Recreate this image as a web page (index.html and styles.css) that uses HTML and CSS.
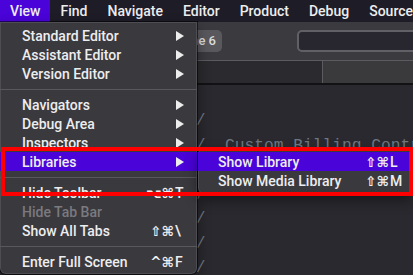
FILE: index.html
```html
<!DOCTYPE html>
<html lang="en">
<head>
    <meta charset="UTF-8">
    <meta name="viewport" content="width=device-width, initial-scale=1.0">
    <title>Xcode - View menu</title>
    <link rel="stylesheet" href="styles.css">
</head>
<body>
    <div class="menubar">
        <span class="menubar-item active">View</span>
        <span class="menubar-item">Find</span>
        <span class="menubar-item">Navigate</span>
        <span class="menubar-item">Editor</span>
        <span class="menubar-item">Product</span>
        <span class="menubar-item">Debug</span>
        <span class="menubar-item">Source Control</span>
    </div>

    <div class="window">
        <div class="toolbar">
            <div class="scheme">iPhone 6</div>
            <div class="search"></div>
        </div>
        <div class="tabbar">
            <div class="tab-left"></div>
            <div class="tab-right"></div>
        </div>
        <div class="editor">
            <div class="code-line">//</div>
            <div class="code-line">//  Custom Billing Contr</div>
            <div class="code-line">//</div>
            <div class="code-line">//</div>
            <div class="code-line">//</div>
            <div class="code-line">//</div>
            <div class="code-line">//</div>
        </div>
    </div>

    <!-- View menu -->
    <div class="menu view-menu">
        <div class="menu-item">Standard Editor <span class="arrow"></span></div>
        <div class="menu-item">Assistant Editor <span class="arrow"></span></div>
        <div class="menu-item">Version Editor <span class="arrow"></span></div>
        <div class="separator"></div>
        <div class="menu-item">Navigators <span class="arrow"></span></div>
        <div class="menu-item">Debug Area <span class="arrow"></span></div>
        <div class="menu-item">Inspectors <span class="arrow"></span></div>
        <div class="menu-item selected">Libraries <span class="arrow"></span></div>
        <div class="separator"></div>
        <div class="menu-item">Hide Toolbar <span class="shortcut"><span class="mods">⌥⌘</span><span class="key">T</span></span></div>
        <div class="menu-item disabled">Hide Tab Bar</div>
        <div class="menu-item">Show All Tabs <span class="shortcut"><span class="mods">⇧⌘</span><span class="key">\</span></span></div>
        <div class="separator"></div>
        <div class="menu-item">Enter Full Screen <span class="shortcut"><span class="mods">^⌘</span><span class="key">F</span></span></div>
    </div>

    <!-- Libraries submenu -->
    <div class="menu submenu">
        <div class="menu-item selected">Show Library <span class="shortcut"><span class="mods">⇧⌘</span><span class="key">L</span></span></div>
        <div class="menu-item">Show Media Library <span class="shortcut"><span class="mods">⇧⌘</span><span class="key">M</span></span></div>
    </div>

    <div class="callout"></div>
</body>
</html>
```

FILE: styles.css
```css
* {
    margin: 0;
    padding: 0;
    box-sizing: border-box;
}

body {
    position: relative;
    width: 413px;
    height: 275px;
    overflow: hidden;
    background: #29292f;
    font-family: 'Roboto', 'DejaVu Sans', sans-serif;
    color: #ededee;
}

/* Menu bar */
.menubar {
    display: flex;
    height: 22px;
    overflow: hidden;
    background: #1e1c27;
    font-size: 14px;
    font-weight: 500;
    white-space: nowrap;
}

.menubar-item {
    padding: 0 9px 0 11px;
    line-height: 22px;
}

.menubar-item:first-child {
    padding-left: 10px;
}

.menubar-item.active {
    background: #4a03d8;
}

/* Window behind the menu */
.toolbar {
    display: flex;
    align-items: center;
    height: 39px;
    overflow: hidden;
    background: #3b3a3f;
    border-bottom: 1px solid #5c5b60;
}

.scheme {
    flex-shrink: 0;
    width: 70px;
    height: 22px;
    margin-left: 152px;
    padding-right: 6px;
    border-radius: 5px;
    background: #59585d;
    color: #dcdcdc;
    font-size: 13px;
    font-weight: 500;
    line-height: 22px;
    text-align: right;
}

.search {
    flex-shrink: 0;
    width: 140px;
    height: 22px;
    margin-left: 75px;
    border: 2px solid #616066;
    border-radius: 5px;
    background: #28262f;
}

.tabbar {
    display: flex;
    height: 24px;
    border-bottom: 2px solid #121114;
}

.tab-left {
    width: 322px;
    background: #2b2a2e;
}

.tab-right {
    flex: 1;
    background: #3a3a3c;
    border-left: 1px solid #5c5b60;
}

.editor {
    height: 189px;
    overflow: hidden;
    padding: 24px 0 0 186px;
    font-family: 'Liberation Mono', monospace;
    font-size: 16.25px;
    line-height: 24.5px;
    color: #6f7781;
}

.code-line {
    white-space: pre;
}

/* Menus */
.menu {
    position: absolute;
    background: #3a393e;
    box-shadow: 0 0 0 1px rgba(0, 0, 0, 0.55), inset 0 0 0 1px rgba(255, 255, 255, 0.1), 0 6px 14px rgba(0, 0, 0, 0.45);
    font-size: 14px;
    font-weight: 500;
    white-space: nowrap;
}

.view-menu {
    top: 22px;
    left: 0;
    width: 197px;
    padding: 4px 0 3px;
    border-radius: 0 0 6px 6px;
}

.submenu {
    top: 148px;
    left: 198px;
    width: 215px;
    padding: 4px 0;
    border-radius: 6px 0 0 6px;
}

.menu-item {
    display: flex;
    align-items: center;
    justify-content: space-between;
    height: 19px;
    padding: 0 12px 0 22px;
}

.submenu .menu-item {
    padding: 0 8px 0 20px;
}

.menu-item.selected {
    background: #4a03d8;
}

.menu-item.disabled {
    color: #7b7a7f;
}

.arrow {
    width: 0;
    height: 0;
    margin-right: 1px;
    border-left: 8px solid #ededee;
    border-top: 5px solid transparent;
    border-bottom: 5px solid transparent;
}

.shortcut {
    display: flex;
    font-family: 'DejaVu Sans', sans-serif;
    font-size: 13.5px;
    font-weight: 600;
}

.shortcut .key {
    width: 10px;
    margin-left: 1px;
    font-family: 'Roboto', sans-serif;
    font-size: 14px;
    font-weight: 500;
}

.submenu .shortcut .key {
    width: 15px;
}

.separator {
    height: 1px;
    margin: 6px 0 5px;
    background: #59585d;
}

/* Red annotation frame */
.callout {
    position: absolute;
    top: 147px;
    left: 1px;
    width: 412px;
    height: 49px;
    border: 4px solid #ff0000;
}
```
